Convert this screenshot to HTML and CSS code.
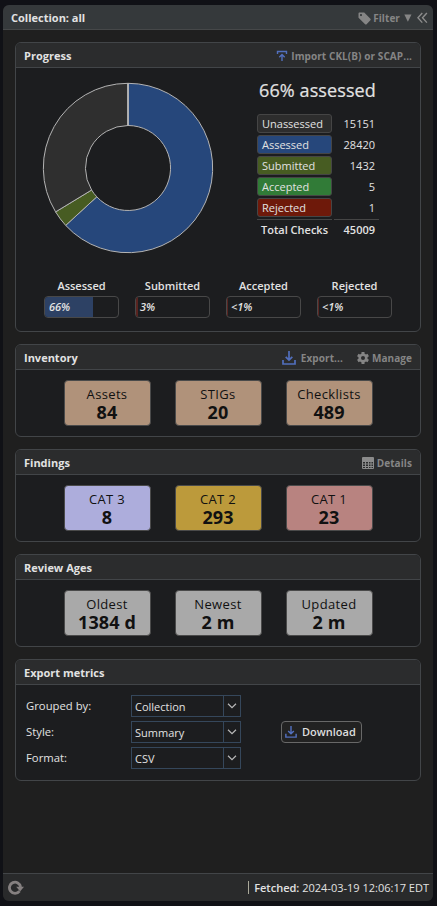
FILE: index.html
```html
<!DOCTYPE html>
<html lang="en">
<head>
<meta charset="utf-8">
<title>Collection metrics</title>
<link rel="stylesheet" href="styles.css">
</head>
<body>
<svg width="0" height="0" class="defs">
  <symbol id="download" viewBox="0 0 14 14"><path d="M1 9v4h12V9M7 0v9M3.700 5.800 7 9.100l3.300-3.300" fill="none" stroke="#526fbd" stroke-width="1.700"/></symbol>
  <symbol id="chevron" viewBox="0 0 10 6"><path d="M1 .800 5 4.700 9 .800" fill="none" stroke="#b8b8b8" stroke-width="1.200"/></symbol>
</svg>
<div class="window">
  <header class="window-head">
    <span class="title">Collection: all</span>
    <span class="tool filter"><svg width="13" height="13" viewBox="0 0 13 13"><path fill="#858585" fill-rule="evenodd" d="M1 .500h5.200l6.200 6.300c.5.500.5 1 0 1.500l-3.800 3.900c-.5.500-1 .5-1.500 0L.500 5.800V1.200zM3 2a1.100 1.100 0 1 0 0 2.200A1.100 1.100 0 0 0 3 2z"/></svg>Filter<svg class="caret" width="8" height="8" viewBox="0 0 8 8"><path fill="#858585" d="M.300.500h7.200L3.900 7.800z"/></svg></span>
    <svg class="collapse" width="11" height="12" viewBox="0 0 11 12"><path d="M5.300 1 .900 5.800l4.400 4.800M9.900 1 5.500 5.800l4.400 4.800" fill="none" stroke="#8c8c8c" stroke-width="1.400"/></svg>
  </header>
  <main class="content">
    <section class="panel progress">
      <div class="panel-head"><span class="title">Progress</span><span class="tool import"><svg width="12" height="12" viewBox="0 0 12 12"><path d="M1.500 4V1.500h9V4M6 11V4.500M3.300 7.200 6 4.500l2.700 2.700" fill="none" stroke="#526fbd" stroke-width="1.400"/></svg>Import CKL(B) or SCAP...</span></div>
      <div class="overview">
        <svg class="donut" width="172" height="172" viewBox="-86 -86 172 172">
          <g stroke="#b4b4b4" stroke-width="1" stroke-linejoin="round">
            <path fill="#26477b" d="M0-84.700A84.700 84.700 0 1 1-62.300 57.400L-31.200 28.800A42.500 42.500 0 1 0 0-42.500z"/>
            <path fill="#475c22" d="M-62.300 57.400A84.700 84.700 0 0 1-72.400 43.900L-36.400 22A42.500 42.500 0 0 0-31.200 28.800z"/>
            <path fill="#2f2f2f" d="M-72.400 43.900A84.700 84.700 0 0 1 0-84.700V-42.500A42.500 42.500 0 0 0-36.400 22z"/>
            <path d="M0-84.700V-42.500" stroke-width="1.800"/>
          </g>
        </svg>
        <div class="summary">
          <div class="headline">66% assessed</div>
          <div class="legend">
            <span class="key unassessed">Unassessed</span><span class="num">15151</span>
            <span class="key assessed">Assessed</span><span class="num">28420</span>
            <span class="key submitted">Submitted</span><span class="num">1432</span>
            <span class="key accepted">Accepted</span><span class="num">5</span>
            <span class="key rejected">Rejected</span><span class="num">1</span>
            <span class="total">Total Checks</span><span class="total num">45009</span>
          </div>
        </div>
      </div>
      <div class="gauges">
        <div class="gauge"><div class="gauge-label">Assessed</div><div class="bar"><i class="fill blue" style="width:66%"></i><span>66%</span></div></div>
        <div class="gauge"><div class="gauge-label">Submitted</div><div class="bar"><i class="fill red" style="width:3%"></i><span>3%</span></div></div>
        <div class="gauge"><div class="gauge-label">Accepted</div><div class="bar"><i class="fill red" style="width:1%"></i><span>&lt;1%</span></div></div>
        <div class="gauge"><div class="gauge-label">Rejected</div><div class="bar"><i class="fill red" style="width:1%"></i><span>&lt;1%</span></div></div>
      </div>
    </section>
    <section class="panel">
      <div class="panel-head"><span class="title">Inventory</span><span class="tool export"><svg width="14" height="14"><use href="#download"/></svg>Export...</span><span class="tool manage"><svg width="12" height="12" viewBox="-6 -6 12 12"><g fill="#858585"><rect x="-1.500" y="-6" width="3" height="12"/><rect x="-1.500" y="-6" width="3" height="12" transform="rotate(60)"/><rect x="-1.500" y="-6" width="3" height="12" transform="rotate(120)"/></g><circle r="3.300" fill="#2b2c2d" stroke="#858585" stroke-width="2.600"/></svg>Manage</span></div>
      <div class="tiles tan"><div class="tile">Assets<b>84</b></div><div class="tile">STIGs<b>20</b></div><div class="tile">Checklists<b>489</b></div></div>
    </section>
    <section class="panel">
      <div class="panel-head"><span class="title">Findings</span><span class="tool details"><svg width="12" height="12" viewBox="0 0 12 12"><rect width="12" height="12" rx="1" fill="#8b8b8b"/><path fill="#2b2c2d" d="M1 5h2v1.500H1zM4 5h2v1.500H4zM7 5h1.500v1.500H7zM9.500 5H11v1.500H9.500zM1 7.500h2V9H1zM4 7.500h2V9H4zM7 7.500h1.500V9H7zM9.500 7.500H11V9H9.500zM1 10h2v1H1zM4 10h2v1H4zM7 10h1.500v1H7zM9.500 10H11v1H9.500z"/></svg>Details</span></div>
      <div class="tiles"><div class="tile cat3">CAT 3<b>8</b></div><div class="tile cat2">CAT 2<b>293</b></div><div class="tile cat1">CAT 1<b>23</b></div></div>
    </section>
    <section class="panel">
      <div class="panel-head"><span class="title">Review Ages</span></div>
      <div class="tiles"><div class="tile">Oldest<b>1384 d</b></div><div class="tile">Newest<b>2 m</b></div><div class="tile">Updated<b>2 m</b></div></div>
    </section>
    <section class="panel metrics">
      <div class="panel-head"><span class="title">Export metrics</span></div>
      <div class="form">
        <div class="fields">
          <span class="label">Grouped by:</span><div class="select"><span>Collection</span><div class="trigger"><svg width="10" height="6"><use href="#chevron"/></svg></div></div>
          <span class="label">Style:</span><div class="select"><span>Summary</span><div class="trigger"><svg width="10" height="6"><use href="#chevron"/></svg></div></div>
          <span class="label">Format:</span><div class="select"><span>CSV</span><div class="trigger"><svg width="10" height="6"><use href="#chevron"/></svg></div></div>
        </div>
        <button class="download"><svg width="12" height="12"><use href="#download"/></svg>Download</button>
      </div>
    </section>
  </main>
  <footer class="window-foot">
    <svg width="17" height="15" viewBox="0 0 17 15"><path d="M11.500 11.200A5.600 5.600 0 1 1 12.600 7" fill="none" stroke="#858080" stroke-width="2.800"/><path fill="#858080" d="M8.200 6.800H16l-3.900 4.600z"/></svg>
    <span class="fetched"><b>Fetched:</b> 2024-03-19 12:06:17 EDT</span>
  </footer>
</div>
</body>
</html>
```
FILE: styles.css
```css
* { box-sizing: border-box; }
body {
  margin: 0;
  height: 906px;
  padding: 5px 4px 5px 3px;
  background: #101116;
  color: #e2e2e2;
  font: 11px/16px "Open Sans", sans-serif;
  overflow: hidden;
}
svg { display: block; flex: none; }
.defs { position: absolute; }
.window {
  height: 896px;
  display: flex;
  flex-direction: column;
  border-radius: 6px;
  overflow: hidden;
  background: #1f1f1f;
}
.window-head {
  height: 25px;
  display: flex;
  align-items: center;
  padding: 0 5px 0 8px;
  background: #35393b;
  border-bottom: 1px solid #464849;
}
.title { font-weight: 700; margin-right: auto; padding-top: 2px; }
.tool {
  display: flex;
  align-items: center;
  color: #858585;
  font-size: 10px;
  letter-spacing: 0.08px;
  font-weight: 700;
  padding-top: 2px;
}
.filter svg:first-child { margin-right: 2px; }
.caret { margin-left: 4px; }
.collapse { margin: 2px 0 0 5px; }
.content { flex: 1; padding: 12px; display: flex; flex-direction: column; gap: 12px; }
.panel {
  height: 93px;
  border: 1px solid #424548;
  border-radius: 6px;
  background: #1c1d1f;
  overflow: hidden;
}
.panel-head {
  height: 25px;
  display: flex;
  align-items: center;
  padding: 0 8px;
  background: #2b2c2d;
  border-bottom: 1px solid #424548;
}
.import svg, .details svg { margin-right: 3px; }
.export svg { margin-right: 5px; }
.manage svg { margin-right: 3px; }
.manage { margin-left: 14px; }
.progress { height: 290px; }
.overview { display: flex; padding: 14px 0 0 26px; height: 204px; }
.summary { margin-left: 43px; }
.headline {
  font-size: 18px;
  font-weight: 500;
  line-height: 22px;
  letter-spacing: 0.1px;
  -webkit-text-stroke: 0.2px #e2e2e2;
  margin: -3px 0 13px 2px;
  white-space: nowrap;
}
.legend {
  display: grid;
  grid-template-columns: 75px 45px;
  grid-auto-rows: 19px;
  gap: 2px;
  line-height: 20px;
}
.key { border: 1px solid #454545; border-radius: 3px; padding: 0 4px; line-height: 18px; }
.num { text-align: right; padding-right: 4px; }
.total { border-top: 1px solid #454545; font-weight: 600; padding: 0 4px; line-height: 20px; }
.unassessed { background: #2d2d2d; }
.assessed { background: #26477b; }
.submitted { background: #475c22; }
.accepted { background: #317b37; }
.rejected { background: #6e190a; }
.gauges { display: flex; gap: 16px; padding: 6px 0 0 28px; }
.gauge { width: 75px; }
.gauge-label { font-weight: 600; text-align: center; line-height: 16px; margin-bottom: 2px; }
.bar {
  display: grid;
  align-items: center;
  height: 22px;
  border: 1px solid #484848;
  border-radius: 4px;
  font-weight: 600;
  font-style: italic;
  overflow: hidden;
}
.bar > * { grid-area: 1 / 1; }
.bar span { padding-left: 4px; }
.fill { height: 100%; }
.blue { background: #2d4164; }
.red { background: #592420; }
.tiles { display: flex; justify-content: center; gap: 24px; padding-top: 10px; }
.tile {
  width: 87px;
  height: 46px;
  border: 1px solid #4a4a4a;
  border-radius: 4px;
  background: #a9a9a9;
  color: #111;
  text-align: center;
  font-size: 13px;
  letter-spacing: 0.35px;
  line-height: 18px;
  padding-top: 4px;
}
.tile b { display: block; font-size: 18px; letter-spacing: 0.1px; line-height: 18px; }
.tan .tile { background: #b0927a; }
.tiles .cat3 { background: #adaddc; }
.tiles .cat2 { background: #bc9a3b; }
.tiles .cat1 { background: #b88380; }
.metrics { height: 122px; }
.form { display: flex; padding: 10px 0 0 10px; align-items: center; }
.fields { display: grid; grid-template-columns: 105px 110px; row-gap: 4px; }
.label { line-height: 22px; font-size: 11.300px; }
.select {
  height: 22px;
  display: flex;
  justify-content: space-between;
  border: 1px solid #35475b;
  padding-left: 3px;
  line-height: 22px;
}
.trigger { width: 17px; border-left: 1px solid #35475b; display: flex; align-items: center; justify-content: center; }
.download {
  width: 81px;
  height: 22px;
  margin-left: 40px;
  padding: 0 0 0 3px;
  display: flex;
  align-items: center;
  gap: 5px;
  font: 600 11px/20px "Open Sans", sans-serif;
  color: #dedede;
  background: #222;
  border: 1px solid #686868;
  border-radius: 4px;
}
.window-foot {
  height: 28px;
  display: flex;
  align-items: center;
  justify-content: space-between;
  padding: 0 4px 0 5px;
  background: #292a2b;
  border-top: 1px solid #424548;
}
.fetched { border-left: 1px solid #aaa99a; padding-left: 5px; line-height: 13px; white-space: nowrap; }
.fetched b { font-weight: 600; }
```
